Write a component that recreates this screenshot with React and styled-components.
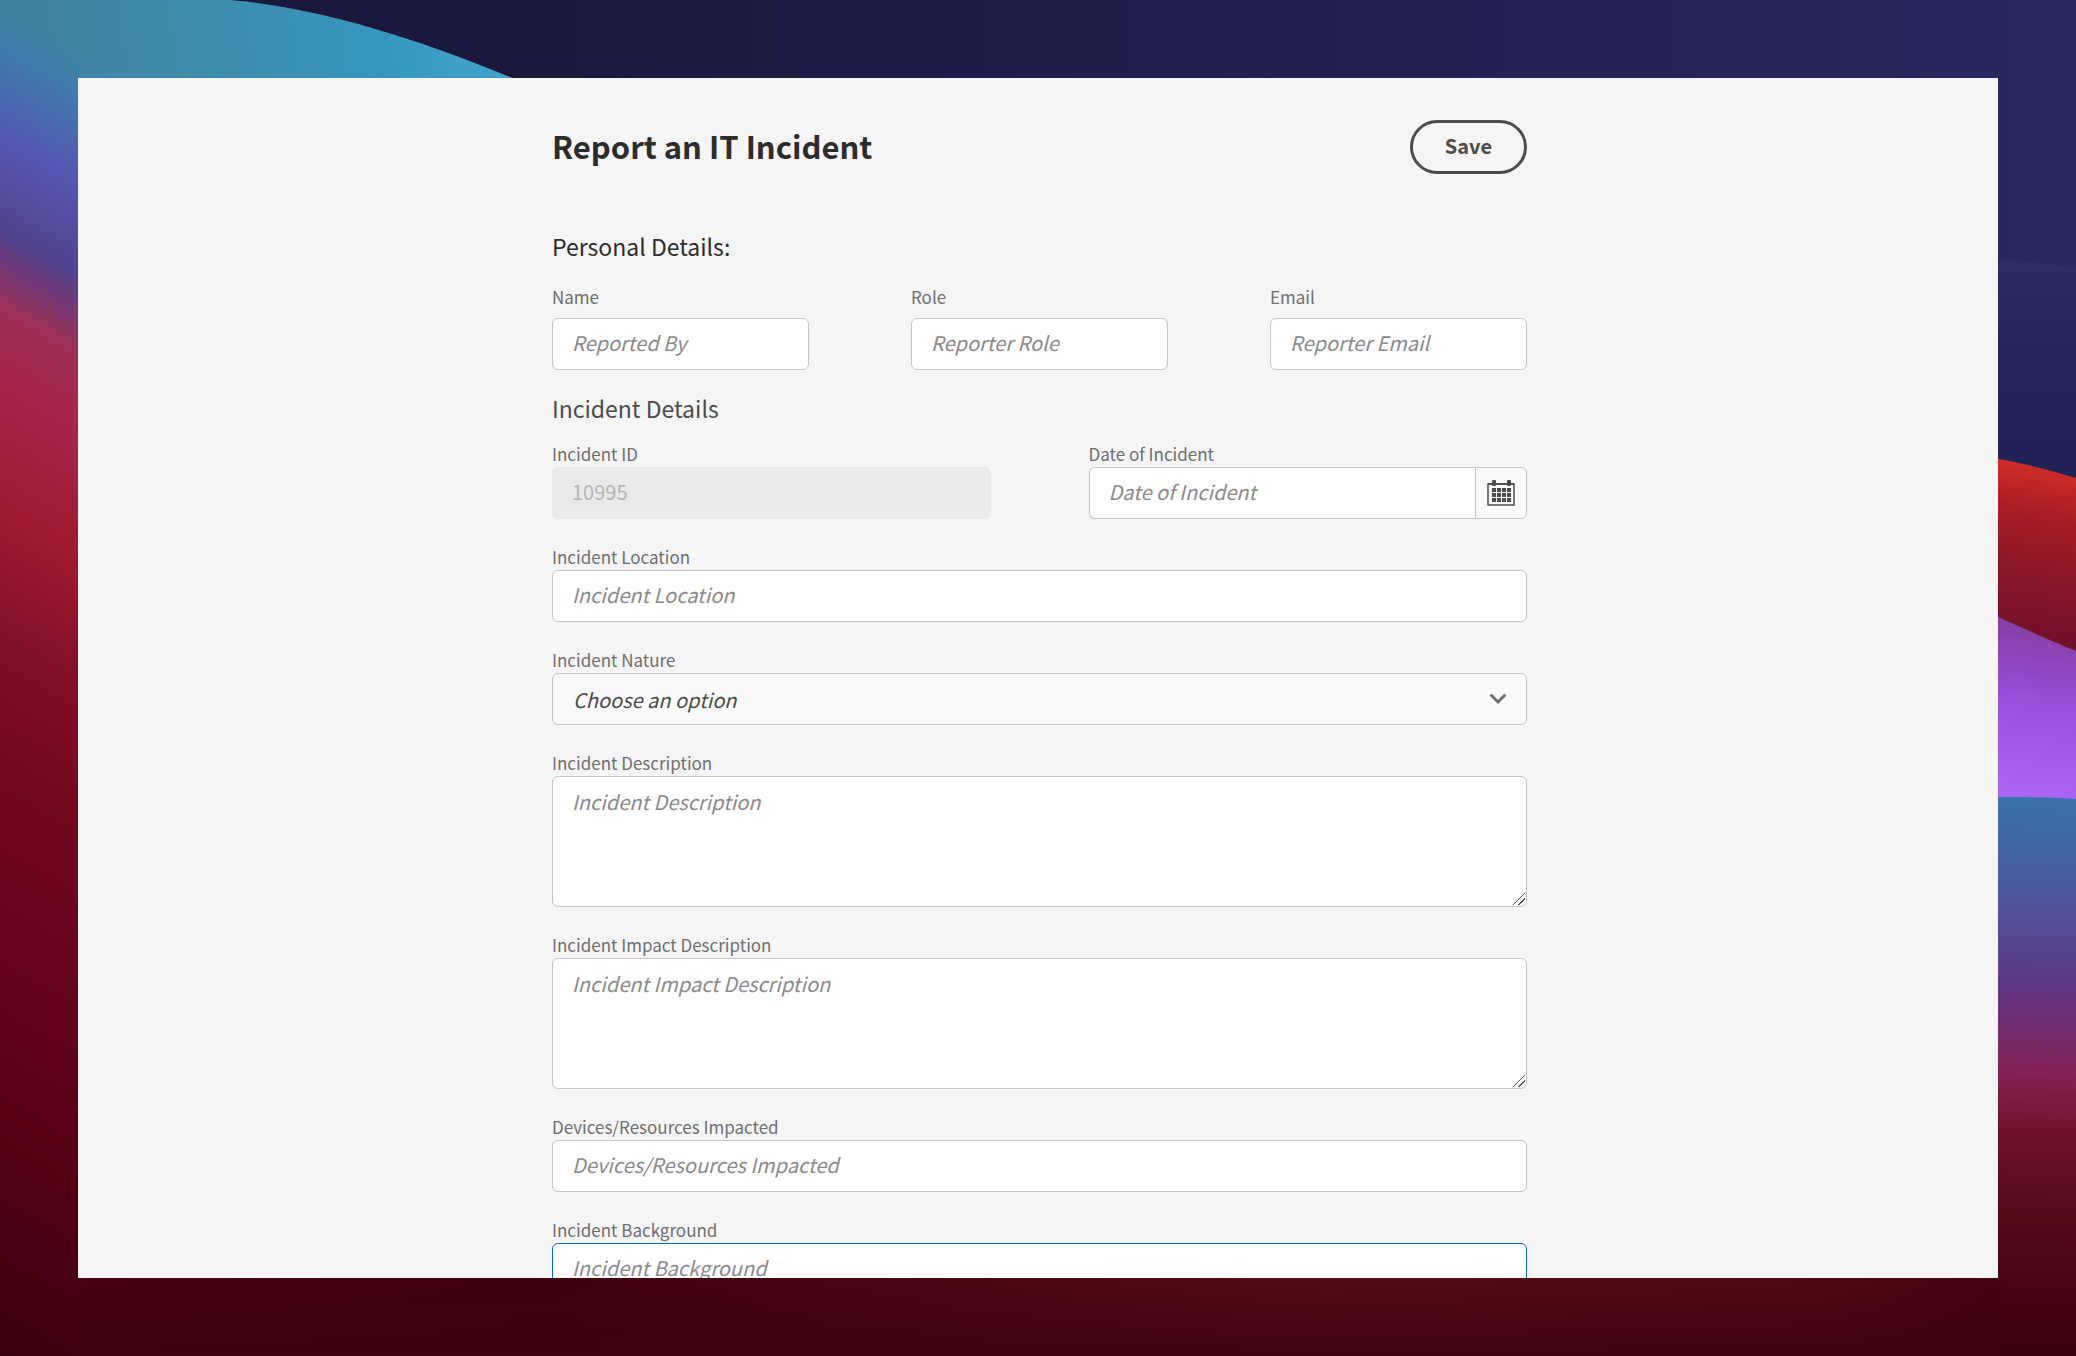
import React from "react";
import styled, { createGlobalStyle, css } from "styled-components";

const GlobalStyle = createGlobalStyle`
  *, *::before, *::after { box-sizing: border-box; }
  html, body, #root { height: 100%; margin: 0; }
  body {
    background: #3f000e;
    font-family: "Noto Sans CJK SC", "Source Sans Pro", sans-serif;
    overflow: hidden;
  }
  input, select, textarea, button { font: inherit; margin: 0; }
`;

const Desktop = styled.div`
  position: relative;
  display: flex;
  height: 100vh;
  padding: 78px;
`;

const WallpaperSvg = styled.svg`
  position: absolute;
  inset: 0;
  width: 100%;
  height: 100%;
`;

const Panel = styled.main`
  position: relative;
  flex: 1;
  min-width: 0;
  padding: 42px 0 0 3px;
  overflow: hidden;
  background: #f5f5f5;
`;

const Form = styled.form`
  max-width: 975px;
  margin: 0 auto;
`;

const Header = styled.header`
  display: flex;
  align-items: center;
  justify-content: space-between;
  margin-bottom: 56px;
`;

const Title = styled.h1`
  margin: 0;
  padding-bottom: 2px;
  color: #2c2c2c;
  font-size: 31px;
  font-weight: 700;
  line-height: 48px;
`;

const SaveButton = styled.button`
  height: 54px;
  padding: 0 32px 4px;
  border: 3px solid #4b4b4b;
  border-radius: 27px;
  background: transparent;
  color: #4b4b4b;
  font-size: 20px;
  font-weight: 700;
`;

const SectionTitle = styled.h2`
  margin: 0 0 ${(p) => (p.$tight ? "19px" : "24px")};
  color: ${(p) => (p.$tight ? "#4b4b4b" : "#2c2c2c")};
  font-size: 23px;
  font-weight: 400;
  line-height: 32px;
`;

const Columns = styled.div`
  display: grid;
  grid-template-columns: repeat(${(p) => p.$count}, minmax(0, 1fr));
  column-gap: ${(p) => p.$gap};
`;

const Details = styled.section`
  margin-top: ${(p) => (p.$first ? "0" : "22px")};
`;

const Stack = styled.div`
  display: grid;
  row-gap: 27px;
`;

const FieldBox = styled.div`
  display: flex;
  flex-direction: column;
  gap: ${(p) => (p.$spaced ? "10px" : "2px")};
  min-width: 0;
`;

const Label = styled.label`
  color: #6e6e6e;
  font-size: 17px;
  line-height: 22px;
`;

const control = css`
  width: 100%;
  min-width: 0;
  border: 1px solid ${(p) => (p.$active ? "#1264d6" : "#c4c4c4")};
  border-radius: 6px;
  outline: none;
  background: #fff;
  color: #4b4b4b;
  font-size: 20px;

  &::placeholder {
    color: #8a8a8a;
    font-style: italic;
    opacity: 1;
  }
`;

const TextInput = styled.input`
  ${control}
  height: 52px;
  padding: 0 19px 4px;

  &:disabled {
    border-color: #eaeaea;
    background: #eaeaea;
    color: #b3b3b3;
  }
`;

const TextArea = styled.textarea`
  ${control}
  display: block;
  height: 131px;
  padding: 10px 19px;
  line-height: 30px;
  resize: vertical;

  &::-webkit-resizer {
    background: linear-gradient(
        135deg,
        transparent 8px,
        #555 8px,
        #555 9px,
        transparent 9px,
        transparent 12px,
        #555 12px,
        #555 13px,
        transparent 13px
      )
      2px 2px / 12px 12px no-repeat;
  }
`;

const SelectWrap = styled.div`
  position: relative;
  display: flex;
`;

const Select = styled.select`
  ${control}
  height: 52px;
  padding: 0 48px 0 20px;
  appearance: none;
  background: #fafafa;
  font-style: italic;
`;

const Chevron = styled.svg`
  position: absolute;
  top: 20px;
  right: 20px;
  width: 18px;
  height: 12px;
  pointer-events: none;
`;

const DateGroup = styled.div`
  display: flex;

  ${TextInput} {
    flex: 1;
    border-right: 0;
    border-radius: 6px 0 0 6px;
  }
`;

const CalendarButton = styled.button`
  display: flex;
  align-items: center;
  justify-content: center;
  width: 52px;
  padding: 0;
  border: 1px solid #c4c4c4;
  border-radius: 0 6px 6px 0;
  background: #fafafa;
`;

function Wallpaper() {
  return (
    <WallpaperSvg viewBox="0 0 2076 1356" preserveAspectRatio="none" aria-hidden="true">
      <defs>
        <linearGradient id="navy" gradientUnits="userSpaceOnUse" x1="480" y1="0" x2="2076" y2="0">
          <stop offset="0" stopColor="#18183b" />
          <stop offset="0.5" stopColor="#221f4d" />
          <stop offset="1" stopColor="#28295e" />
        </linearGradient>
        <linearGradient id="left" gradientUnits="userSpaceOnUse" x1="0" y1="0" x2="0" y2="1356" gradientTransform="skewY(30)">
          <stop offset="0" stopColor="#3f849c" />
          <stop offset="0.035" stopColor="#427caf" />
          <stop offset="0.1" stopColor="#5457b0" />
          <stop offset="0.17" stopColor="#52438e" />
          <stop offset="0.225" stopColor="#9c3058" />
          <stop offset="0.28" stopColor="#a8264b" />
          <stop offset="0.38" stopColor="#9e1a30" />
          <stop offset="0.46" stopColor="#831029" />
          <stop offset="0.58" stopColor="#70081e" />
          <stop offset="0.73" stopColor="#62041b" />
          <stop offset="0.84" stopColor="#540011" />
          <stop offset="0.93" stopColor="#440013" />
          <stop offset="1" stopColor="#3a000d" />
        </linearGradient>
        <linearGradient id="teal" gradientUnits="userSpaceOnUse" x1="40" y1="0" x2="440" y2="-60">
          <stop offset="0" stopColor="#3c8cae" stopOpacity="0" />
          <stop offset="0.45" stopColor="#3c8cae" />
          <stop offset="0.85" stopColor="#3598bf" />
          <stop offset="1" stopColor="#3f9fc5" />
        </linearGradient>
        <linearGradient id="indigo" x1="0" y1="0" x2="0" y2="1">
          <stop offset="0" stopColor="#2f2e65" />
          <stop offset="0.35" stopColor="#25265a" />
          <stop offset="0.85" stopColor="#1f2053" />
          <stop offset="1" stopColor="#242456" />
        </linearGradient>
        <linearGradient id="red" gradientUnits="userSpaceOnUse" x1="2030" y1="462" x2="2000" y2="640">
          <stop offset="0" stopColor="#cf2c28" />
          <stop offset="0.3" stopColor="#a61c27" />
          <stop offset="0.65" stopColor="#841527" />
          <stop offset="1" stopColor="#70102a" />
        </linearGradient>
        <linearGradient id="violet" gradientUnits="userSpaceOnUse" x1="2030" y1="628" x2="2008" y2="800">
          <stop offset="0" stopColor="#8740a6" />
          <stop offset="0.45" stopColor="#9851dd" />
          <stop offset="1" stopColor="#ad67f5" />
        </linearGradient>
        <linearGradient id="dusk" gradientUnits="userSpaceOnUse" x1="2010" y1="797" x2="1996" y2="1356">
          <stop offset="0" stopColor="#3972aa" />
          <stop offset="0.16" stopColor="#4b579f" />
          <stop offset="0.34" stopColor="#603883" />
          <stop offset="0.49" stopColor="#832256" />
          <stop offset="0.6" stopColor="#6f1329" />
          <stop offset="0.75" stopColor="#550a18" />
          <stop offset="0.9" stopColor="#43020e" />
          <stop offset="1" stopColor="#3a020d" />
        </linearGradient>
        <linearGradient id="floor" x1="0" y1="0" x2="1" y2="0">
          <stop offset="0" stopColor="#46000f" />
          <stop offset="0.25" stopColor="#3f000d" />
          <stop offset="0.65" stopColor="#540c15" />
          <stop offset="0.9" stopColor="#500812" />
          <stop offset="1" stopColor="#43020e" />
        </linearGradient>
        <linearGradient id="shade" x1="0" y1="0" x2="0" y2="1">
          <stop offset="0" stopColor="#3c020e" stopOpacity="0" />
          <stop offset="1" stopColor="#3c020e" stopOpacity="0.9" />
        </linearGradient>
      </defs>
      <rect width="2076" height="1356" fill="url(#navy)" />
      <path d="M0 0H228C330 8 440 48 512 78L620 130V1356H0Z" fill="url(#left)" />
      <path d="M0 0H228C330 8 440 48 512 78H0Z" fill="url(#teal)" />
      <path d="M1900 252Q2000 257 2076 268V520H1900Z" fill="url(#indigo)" />
      <path d="M1900 446Q2000 454 2076 478V700H1900Z" fill="url(#red)" />
      <path d="M1900 570Q2010 624 2076 651V850H1900Z" fill="url(#violet)" />
      <path d="M1900 799Q2030 795 2076 799V1356H1900Z" fill="url(#dusk)" />
      <rect x="78" y="1270" width="1920" height="86" fill="url(#floor)" />
      <rect x="78" y="1270" width="1920" height="86" fill="url(#shade)" />
    </WallpaperSvg>
  );
}

function CalendarIcon() {
  const columns = [5, 10, 15, 20];
  const rows = [8, 13, 18];
  return (
    <svg width="28" height="26" viewBox="0 0 28 26" fill="#4b4b4b" aria-hidden="true">
      <rect x="1" y="4" width="26" height="21" fill="none" stroke="#4b4b4b" strokeWidth="1.5" />
      <rect x="1" y="3" width="26" height="2" />
      <rect x="5" y="0" width="4" height="6" rx="1" />
      <rect x="20" y="0" width="4" height="6" rx="1" />
      {rows.map((y) => columns.map((x) => <rect key={`${x}-${y}`} x={x} y={y} width="4" height="4" />))}
    </svg>
  );
}

function Field({ id, label, spaced, children }) {
  return (
    <FieldBox $spaced={spaced}>
      <Label htmlFor={id}>{label}</Label>
      {children}
    </FieldBox>
  );
}

export default function App() {
  return (
    <>
      <GlobalStyle />
      <Desktop>
        <Wallpaper />
        <Panel>
          <Form onSubmit={(e) => e.preventDefault()}>
            <Header>
              <Title>Report an IT Incident</Title>
              <SaveButton type="submit">Save</SaveButton>
            </Header>

            <Details $first>
              <SectionTitle>Personal Details:</SectionTitle>
              <Columns $count={3} $gap="102px">
                <Field id="name" label="Name" spaced>
                  <TextInput id="name" placeholder="Reported By" />
                </Field>
                <Field id="role" label="Role" spaced>
                  <TextInput id="role" placeholder="Reporter Role" />
                </Field>
                <Field id="email" label="Email" spaced>
                  <TextInput id="email" type="email" placeholder="Reporter Email" />
                </Field>
              </Columns>
            </Details>

            <Details>
              <SectionTitle $tight>Incident Details</SectionTitle>
              <Stack>
                <Columns $count={2} $gap="98px">
                  <Field id="incident-id" label="Incident ID">
                    <TextInput id="incident-id" defaultValue="10995" disabled />
                  </Field>
                  <Field id="date" label="Date of Incident">
                    <DateGroup>
                      <TextInput id="date" placeholder="Date of Incident" />
                      <CalendarButton type="button" aria-label="Calendar">
                        <CalendarIcon />
                      </CalendarButton>
                    </DateGroup>
                  </Field>
                </Columns>
                <Field id="location" label="Incident Location">
                  <TextInput id="location" placeholder="Incident Location" />
                </Field>
                <Field id="nature" label="Incident Nature">
                  <SelectWrap>
                    <Select id="nature" defaultValue="">
                      <option value="">Choose an option</option>
                    </Select>
                    <Chevron viewBox="0 0 18 12" fill="none" aria-hidden="true">
                      <path d="M2.5 2.5L9 9L15.5 2.5" stroke="#6e6e6e" strokeWidth="3" strokeLinecap="round" />
                    </Chevron>
                  </SelectWrap>
                </Field>
                <Field id="description" label="Incident Description">
                  <TextArea id="description" placeholder="Incident Description" />
                </Field>
                <Field id="impact" label="Incident Impact Description">
                  <TextArea id="impact" placeholder="Incident Impact Description" />
                </Field>
                <Field id="devices" label="Devices/Resources Impacted">
                  <TextInput id="devices" placeholder="Devices/Resources Impacted" />
                </Field>
                <Field id="background" label="Incident Background">
                  <TextInput id="background" placeholder="Incident Background" $active />
                </Field>
              </Stack>
            </Details>
          </Form>
        </Panel>
      </Desktop>
    </>
  );
}
